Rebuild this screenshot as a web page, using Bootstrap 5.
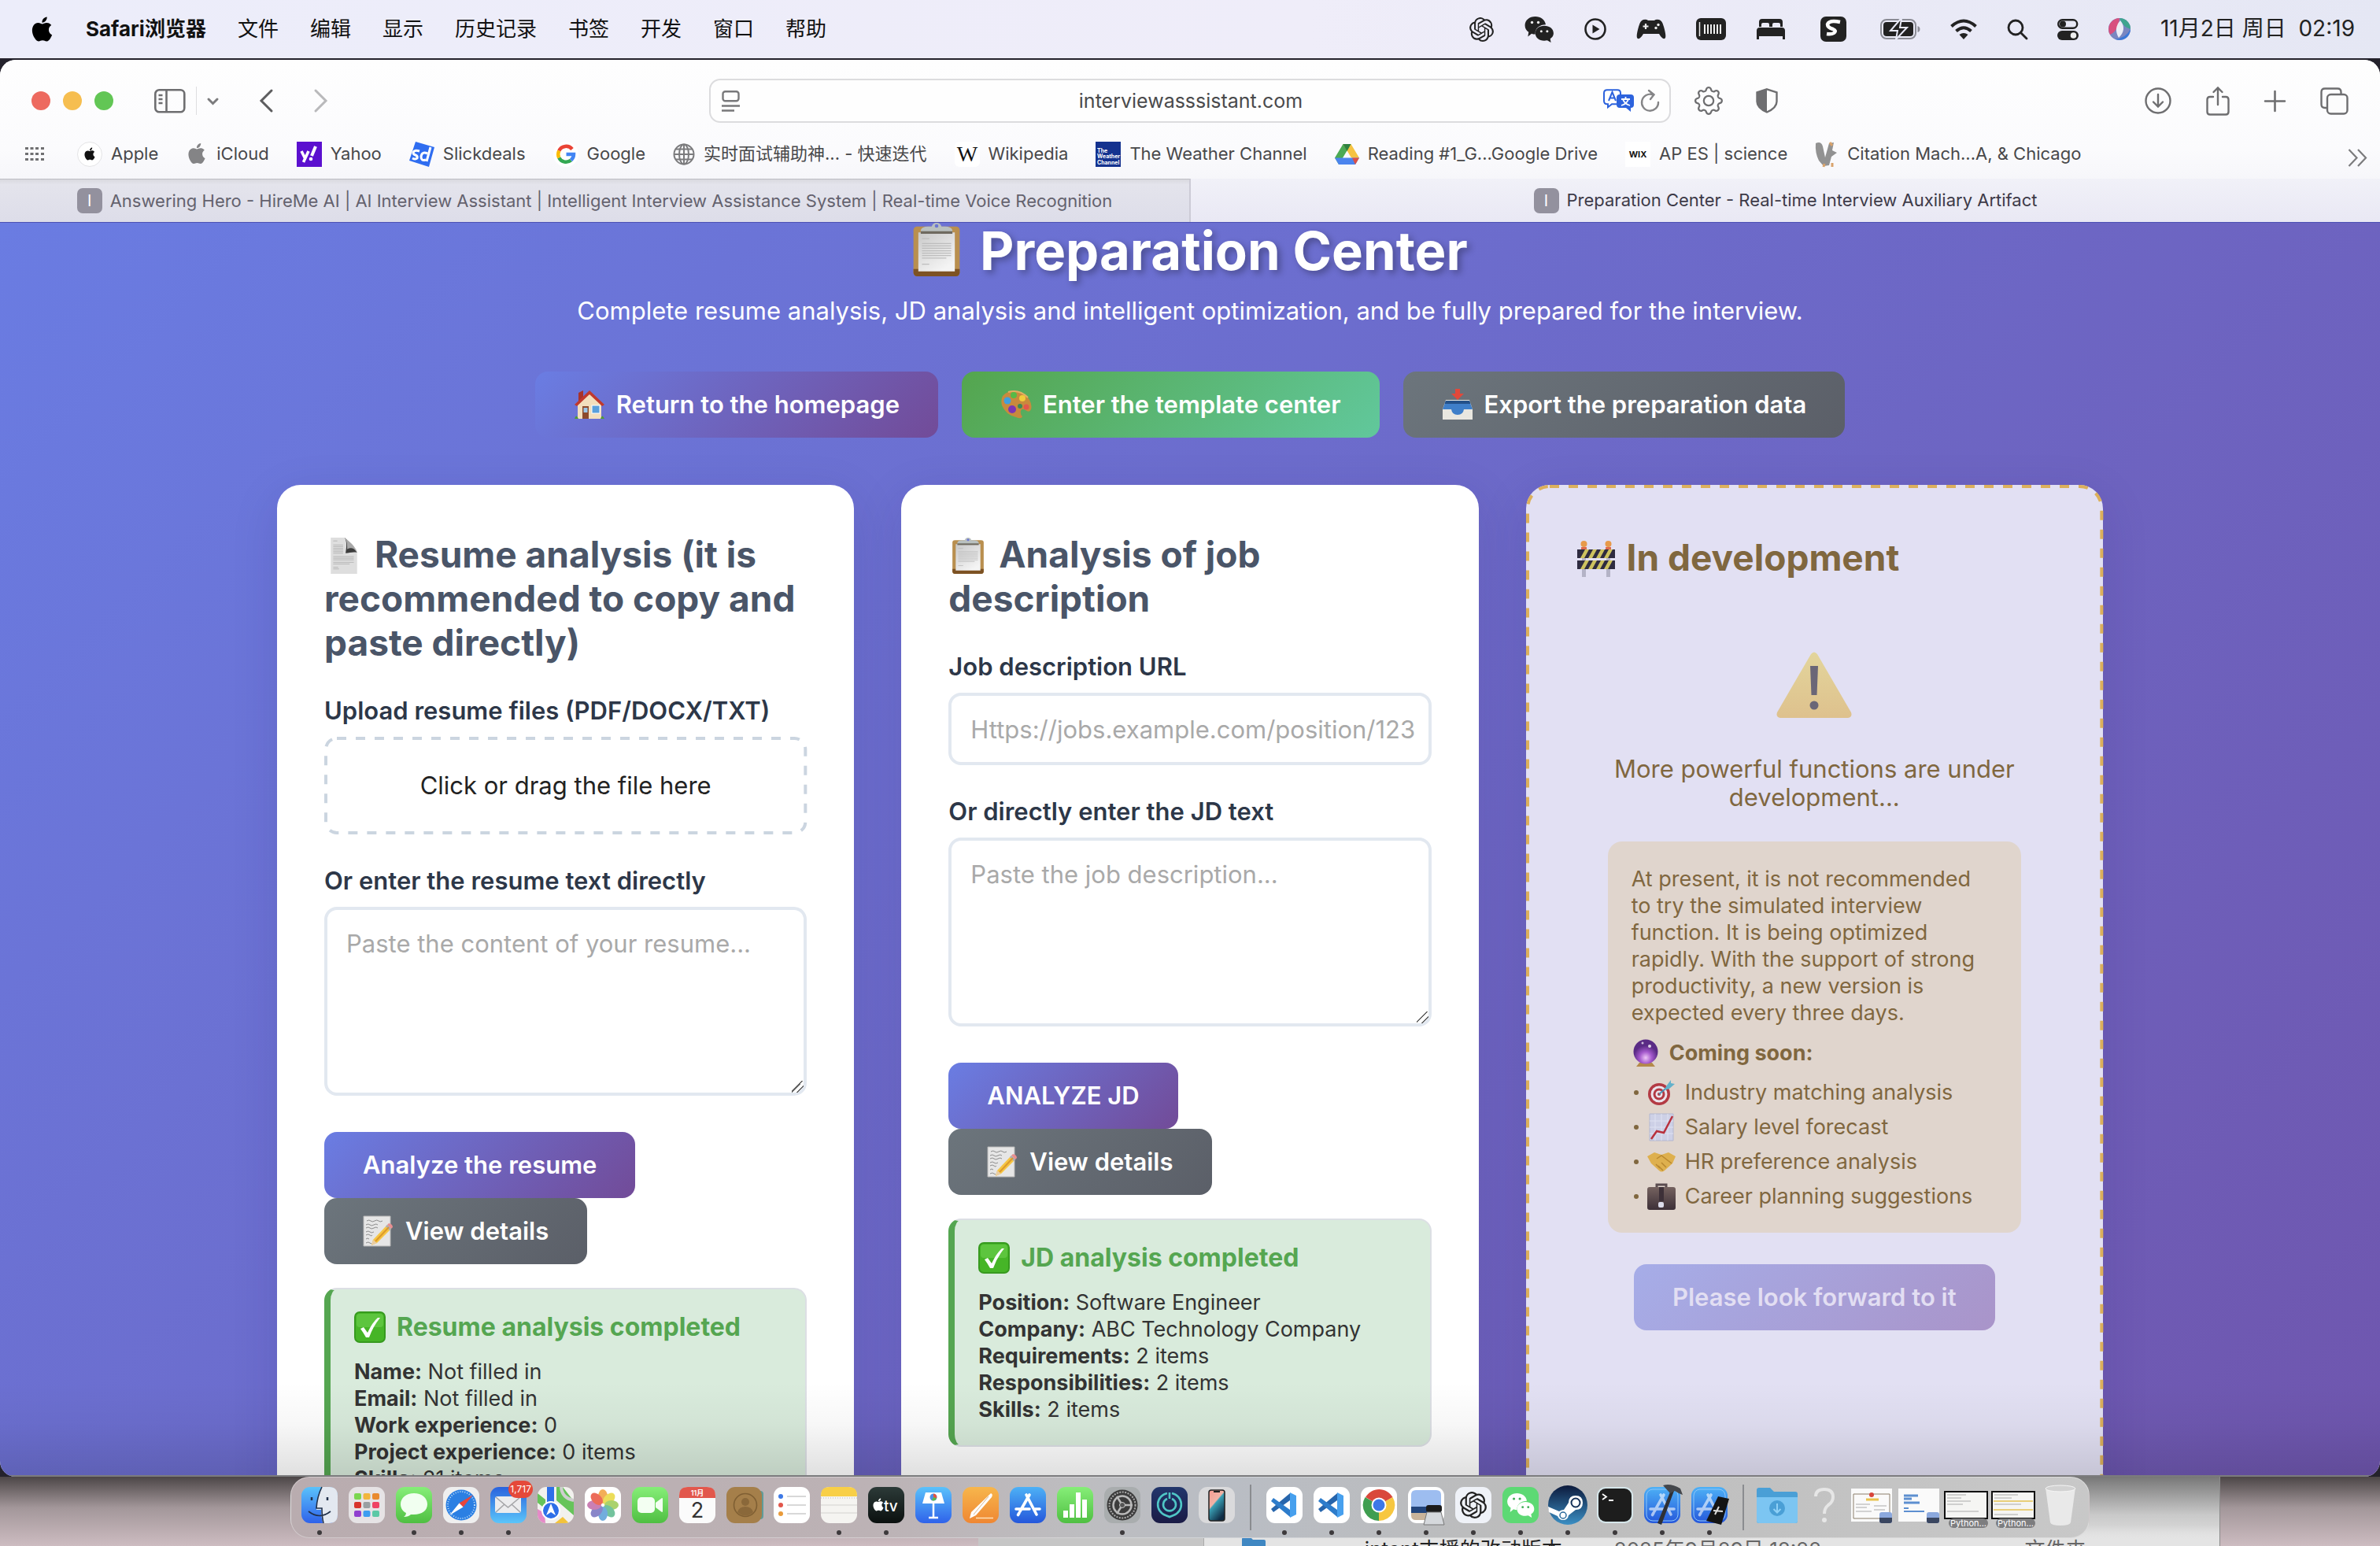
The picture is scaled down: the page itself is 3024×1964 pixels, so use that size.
<!DOCTYPE html>
<html lang="en">
<head>
<meta charset="utf-8">
<meta name="viewport" content="width=device-width, initial-scale=1">
<title>Preparation Center - Real-time Interview Auxiliary Artifact</title>
<link href="https://cdn.jsdelivr.net/npm/bootstrap@5.3.0/dist/css/bootstrap.min.css" rel="stylesheet">
<style>
:root{--ui:Inter,"Noto Sans CJK SC",sans-serif}
html,body{height:100%}
body{font-family:var(--ui);background:#24222c;overflow:hidden;line-height:1.2}
svg{display:block;flex:none;overflow:visible}
.desktop{height:100vh}
.menubar{height:74px;padding:0 32px 0 38px;background:linear-gradient(90deg,#ecedfa,#efedf9 55%,#e5e7f4);font-size:26px;color:#111;margin-bottom:2px}
.menubar .menus{gap:40px}
.menubar .tray{gap:38px;color:#222}
.menubar .clock{font-size:28px}
.menubar a{color:inherit;text-decoration:none}
.browser{background:#fcfcfd;border-radius:20px;overflow:hidden;flex:1 1 0;min-height:0}
.chrome-top{background:linear-gradient(180deg,#fefefe,#fbfbfd 55%,#f0f0f6)}
.toolbar{height:104px;color:#6e6e70}
.toolbar button,.bookmarks button{background:none;border:0;padding:0;color:inherit}
.toolbar .wing{flex:1 1 0;min-width:0}
.toolbar .acts{gap:44px}
.toolbar .exts{gap:42px;padding-left:30px}
.light{width:24px;height:24px;border-radius:50%}
.vline{height:36px;margin:0 13px;border-left:1px solid #dedee0}
.addr{flex:0 0 1222px;max-width:41%;height:56px;border:2px solid #dcdcde;border-radius:14px;background:#fefefe;padding:0 12px 0 14px}
.addr .side{flex:0 0 80px}
.addr input{border:0;background:none;outline:0;text-align:center;font-size:25px;color:#4a4a4c;min-width:0}
.bookmarks{height:47px;padding:0 16px 16px 32px;font-size:22px;color:#48484a}
.bookmarks .marks{gap:35px;padding-left:42px}
.bookmarks a{color:inherit;text-decoration:none;gap:11px;white-space:nowrap}
.bookmarks .more{margin-top:10px}
.tabs{height:55px;font-size:22px}
.tabs button{border:0;flex:1 1 0;gap:10px;white-space:nowrap;padding:0;color:#3d3a48;background:linear-gradient(180deg,#f1f1f8,#e9e8f4)}
.tabs button.idle{color:#64626e;background:linear-gradient(180deg,#d9d9df,#e4e4ec 12%,#dddde9);border-right:2px solid #cccbd6;border-top:1px solid #bcbcc2}
.tabs .fav{width:32px;height:32px;border-radius:7px;background:#93919e;color:#fff;font-size:20px;line-height:32px}
.webview{flex:1 1 0;min-height:0;overflow:hidden;position:relative;border-top:1px solid #4d52b4;background:linear-gradient(135deg,#6a7ce2 0%,#6f56ae 100%)}
.webview::after{content:"";position:absolute;left:0;right:0;bottom:0;height:120px;background:linear-gradient(180deg,transparent,rgba(0,0,0,.03) 45%,rgba(0,0,0,.12));pointer-events:none;border-bottom:2px solid #7b7b7d}
.page{max-width:2320px;margin:0 auto}
.hero{color:#fff;text-align:center}
.hero h1{font-size:67px;line-height:70px;font-weight:700;margin:0 0 22px;text-shadow:4px 4px 8px rgba(0,0,0,.3)}
.hero h1 svg{margin-right:8px}
.hero p{font-size:31px;line-height:38px;margin:0 0 58px}
.actions{gap:30px;margin-bottom:60px}
.cta{border:0;border-radius:16px;height:84px;padding:0 49px;font-size:31px;line-height:38px;font-weight:600;color:#fff;display:inline-flex;align-items:center;gap:14px;white-space:nowrap}
.cta-main{background:linear-gradient(135deg,#6a7de3,#724b98)}
.cta-green{background:linear-gradient(135deg,#54a54e,#61c89c)}
.cta-gray{background:linear-gradient(135deg,#6c757c,#5b5f68)}
.cta-soon{background:linear-gradient(135deg,#a6ade8,#a994c9);color:#e2def2}
.panels{display:grid;grid-template-columns:repeat(3,minmax(0,1fr));gap:60px}
.panel{background:#fff;border-radius:30px;padding:60px;box-shadow:0 16px 60px rgba(40,20,90,.13);color:#2d3748;min-width:0;position:relative}
.panel h2{font-size:46px;line-height:56px;font-weight:700;color:#4a5568;margin:0 0 40px}
.panel h2 svg,.hero h1 svg{display:inline-block;vertical-align:-8px}
.panel h2 svg{margin-right:3px}
.panel .lbl{display:block;font-size:31px;line-height:38px;font-weight:600;margin:0 0 14px}
.panel .field{display:block;width:100%;border:4px solid #e2e8f0;border-radius:16px;padding:24px 12px 24px 24px;font-size:31px;line-height:38px;color:#2d3748;margin-bottom:40px;background:#fff}
.panel input.field{height:92px}
.panel textarea.field{height:240px;margin-bottom:46px;resize:vertical}
textarea.field::-webkit-resizer{background:linear-gradient(135deg,transparent 42%,#666 42%,#666 50%,transparent 50%,transparent 68%,#666 68%,#666 76%,transparent 76%)}
.field::placeholder{color:#a9a9a9;opacity:1}
.drop{display:flex;align-items:center;justify-content:center;position:relative;height:124px;margin-bottom:40px;font-size:31px;color:#222;cursor:pointer}
.dashes{position:absolute;inset:0;width:100%;height:100%}
.dashes rect{x:2px;y:2px;width:calc(100% - 4px);height:calc(100% - 4px);fill:none;stroke-width:4px;stroke-dasharray:12 12}
.result{margin-top:30px;border:2px solid #dcdfe4;border-left:8px solid #55a651;border-radius:16px;background:#d9ebdc;padding:28px 30px;font-size:27px;line-height:34px;color:#333}
.result h3{font-size:32px;line-height:40px;font-weight:700;color:#55a651;margin:0 0 20px;display:flex;align-items:center;gap:14px}
.result p{margin:0}
.soon{background:#e2e0f3;padding:64px;color:#80673f}
.soon h2{color:#80673f;margin-bottom:92px}
.soon .tease{font-size:31px;line-height:36px;margin:47px 0 38px;text-align:center}
.soon .note{margin:0 40px 40px;border-radius:18px;background:#e0d5cd;padding:31px 44px 24px 30px;font-size:27px;line-height:34px}
.soon .note p{margin:0 0 14px}
.soon .note ul{margin:0;padding:0;list-style:none}
.soon .note li,.soon .note .head{display:flex;align-items:center;height:44px;gap:12px;white-space:nowrap}
.soon .note .head{height:40px;margin:0 0 8px}
.soon .note li::before{content:"";width:6px;height:6px;border-radius:50%;background:#80673f;margin:0 -1px 0 3px}
.shelf{flex:0 0 88px;position:relative;overflow:hidden;background:linear-gradient(180deg,#4c4647,#a3979a 45%,#cdbcc1)}
.finder{position:absolute;left:41.1%;right:6.7%;top:0;bottom:0;background:linear-gradient(180deg,#777,#c9c9c9 55%,#e6e6e6);border-right:1px solid #8a8a8a}
.finder .pane{width:287px;background:#c6c6c6;border-right:1px solid #aaa}
.finder .filerow{padding:77px 170px 0 30px;font-size:26px;line-height:32px;color:#222;white-space:nowrap;background:linear-gradient(180deg,transparent 70%,#e4e4e4 90%)}
.finder .fname{padding-left:118px}
.finder .fmeta{color:#666}
.finder .fdate{margin:0 auto 0 66px}
.dock{position:relative;height:78px;padding:0 6px;border-radius:24px;border:1px solid rgba(255,255,255,.35);background:linear-gradient(90deg,#b9acaf,#bcb2b5 32%,#bdbdc0 44%,#b9bdc4 52%,#bcbcbc 68%,#c8c8c8)}
.slot{width:60px;height:76px;border:0;background:none;padding:12px 0 0;display:flex;flex-direction:column;align-items:center;gap:9px;position:relative}
.slot.on::after{content:"";width:6px;height:6px;border-radius:50%;background:#3d3a3c}
.slot svg{width:46px;height:46px}
.slot .wide{width:58px}
.sep{width:26px;height:76px;padding:9px 12px}
.sep i{display:block;width:2px;height:58px;background:#8a8c90}
.bubble{position:absolute;top:4px;right:-1px;height:22px;border-radius:11px;background:#e5493a;color:#fff;font-size:12px;line-height:22px;padding:0 2px}
</style>
<script src="https://cdn.jsdelivr.net/npm/bootstrap@5.3.0/dist/js/bootstrap.bundle.min.js"></script>
</head>
<body>
<svg width="0" height="0" class="position-absolute" aria-hidden="true">
<defs>
<linearGradient id="gBlue" x2="0" y2="1"><stop stop-color="#5ac2fb"/><stop offset="1" stop-color="#2f62ea"/></linearGradient>
<linearGradient id="gBlue2" x2="0" y2="1"><stop stop-color="#2a62dd"/><stop offset="1" stop-color="#5bc5fa"/></linearGradient>
<linearGradient id="gApp" x2="0" y2="1"><stop stop-color="#4db1f6"/><stop offset="1" stop-color="#2557db"/></linearGradient>
<linearGradient id="gGreen" x2="0" y2="1"><stop stop-color="#86ee78"/><stop offset="1" stop-color="#4fbf42"/></linearGradient>
<linearGradient id="gOrange" x2="0" y2="1"><stop stop-color="#f7b64c"/><stop offset="1" stop-color="#ef8733"/></linearGradient>
<linearGradient id="gDark" x2="0" y2="1"><stop stop-color="#2c3a38"/><stop offset="1" stop-color="#0b100f"/></linearGradient>
<linearGradient id="gNavy" x2="0" y2="1"><stop stop-color="#22366c"/><stop offset="1" stop-color="#1a1b45"/></linearGradient>
<linearGradient id="gSteam" x2="0" y2="1"><stop stop-color="#0c1a3c"/><stop offset="1" stop-color="#3b8fc4"/></linearGradient>
<linearGradient id="gWarn" x2="0" y2="1"><stop stop-color="#e3d59c"/><stop offset="1" stop-color="#dec18d"/></linearGradient>
<linearGradient id="gPaper" x1="0" x2=".6" y2="1"><stop stop-color="#c9c9c9"/><stop offset="1" stop-color="#f4f4f4"/></linearGradient>
<linearGradient id="gCase" x2="0" y2="1"><stop stop-color="#75625f"/><stop offset="1" stop-color="#3d3038"/></linearGradient>
<radialGradient id="gOrb" cx=".5" cy=".75"><stop stop-color="#efc6f7"/><stop offset=".5" stop-color="#a458cc"/><stop offset="1" stop-color="#5a2b85"/></radialGradient>
<linearGradient id="gPhone" x2=".6" y2="1"><stop stop-color="#f59a90"/><stop offset=".45" stop-color="#f1b3a6"/><stop offset=".5" stop-color="#3aa0b5"/><stop offset="1" stop-color="#0f2c45"/></linearGradient>
<symbol id="apple" viewBox="0 0 24 24"><path fill="currentColor" d="M12.152 6.896c-.948 0-2.415-1.078-3.96-1.04-2.04.027-3.91 1.183-4.961 3.014-2.117 3.675-.546 9.103 1.519 12.09 1.013 1.454 2.208 3.09 3.792 3.039 1.52-.065 2.09-.987 3.935-.987 1.831 0 2.35.987 3.96.948 1.637-.026 2.676-1.48 3.676-2.948 1.156-1.688 1.636-3.325 1.662-3.415-.039-.013-3.182-1.221-3.22-4.857-.026-3.04 2.48-4.494 2.597-4.559-1.429-2.09-3.623-2.324-4.39-2.376-2-.156-3.675 1.09-4.61 1.09zM15.53 3.83c.843-1.012 1.4-2.427 1.245-3.83-1.207.052-2.662.805-3.532 1.818-.78.896-1.454 2.338-1.273 3.714 1.338.104 2.715-.688 3.559-1.701"/></symbol>
<symbol id="openai" viewBox="0 0 24 24"><path fill="currentColor" d="M22.2819 9.8211a5.9847 5.9847 0 0 0-.5157-4.9108 6.0462 6.0462 0 0 0-6.5098-2.9A6.0651 6.0651 0 0 0 4.9807 4.1818a5.9847 5.9847 0 0 0-3.9977 2.9 6.0462 6.0462 0 0 0 .7427 7.0966 5.98 5.98 0 0 0 .511 4.9107 6.051 6.051 0 0 0 6.5146 2.9001A5.9847 5.9847 0 0 0 13.2599 24a6.0557 6.0557 0 0 0 5.7718-4.2058 5.9894 5.9894 0 0 0 3.9977-2.9001 6.0557 6.0557 0 0 0-.7475-7.0729zm-9.022 12.6081a4.4755 4.4755 0 0 1-2.8764-1.0408l.1419-.0804 4.7783-2.7582a.7948.7948 0 0 0 .3927-.6813v-6.7369l2.02 1.1686a.071.071 0 0 1 .038.052v5.5826a4.504 4.504 0 0 1-4.4945 4.4944zm-9.6607-4.1254a4.4708 4.4708 0 0 1-.5346-3.0137l.142.0852 4.783 2.7582a.7712.7712 0 0 0 .7806 0l5.8428-3.3685v2.3324a.0804.0804 0 0 1-.0332.0615L9.74 19.9502a4.4992 4.4992 0 0 1-6.1408-1.6464zM2.3408 7.8956a4.485 4.485 0 0 1 2.3655-1.9728V11.6a.7664.7664 0 0 0 .3879.6765l5.8144 3.3543-2.0201 1.1685a.0757.0757 0 0 1-.071 0l-4.8303-2.7865A4.504 4.504 0 0 1 2.3408 7.872zm16.5963 3.8558L13.1038 8.364 15.1192 7.2a.0757.0757 0 0 1 .071 0l4.8303 2.7913a4.4944 4.4944 0 0 1-.6765 8.1042v-5.6772a.79.79 0 0 0-.407-.667zm2.0107-3.0231l-.142-.0852-4.7735-2.7818a.7759.7759 0 0 0-.7854 0L9.409 9.2297V6.8974a.0662.0662 0 0 1 .0284-.0615l4.8303-2.7866a4.4992 4.4992 0 0 1 6.6802 4.66zM8.3065 12.863l-2.02-1.1638a.0804.0804 0 0 1-.038-.0567V6.0742a4.4992 4.4992 0 0 1 7.3757-3.4537l-.142.0805L8.704 5.459a.7948.7948 0 0 0-.3927.6813zm1.0976-2.3654l2.602-1.4998 2.6069 1.4998v2.9994l-2.5974 1.4997-2.6067-1.4997Z"/></symbol>
<symbol id="clip" viewBox="0 0 40 44"><rect x="1" y="3" width="38" height="41" rx="3" fill="#b98f4f"/><path d="M1 38h38v3a3 3 0 0 1-3 3H4a3 3 0 0 1-3-3z" fill="#7d5223"/><path d="M5 8h30v32H5z" fill="url(#gPaper)"/><g stroke="#bdbdbd" stroke-width=".8"><path d="M8 13h6M8 17h24M8 19h24M8 21h24M8 23h24M8 25h24M8 27h24M8 29h20M8 34h6"/></g><path d="M7 8V6q1-3 6-3h3q1-3 4-3t4 3h3q5 0 6 3v2z" fill="#b9c0bf"/><path d="M7 7h26v2H7z" fill="#6f6a60"/><circle cx="20" cy="2.600" r="1.500" fill="#6b76d2"/></symbol>
<symbol id="docpage" viewBox="0 0 32 44"><path d="M0 0h17l15 17v27H0z" fill="#dedede"/><path d="M17 0c3 6 2 12 1 19 5-1 10-2 14-1z" fill="#3c3c3c"/><path d="M17 0c6 5 12 10 15 17-5-5-8-5-12-3 0-5 0-9-3-14z" fill="#a8a8a8"/><g stroke="#b5b5b5" stroke-width=".9"><path d="M3 4h5M3 9h12M3 11h12M3 13h12M3 15h12M3 17h12M3 19h12M3 23h25M3 25h25M3 27h25M3 30h25M3 32h20M3 36h6M3 38h7"/></g></symbol>
<symbol id="memo" viewBox="0 0 40 40"><path d="M1 1h34v38H1z" fill="#e6e6e6" stroke="#b5b5b5"/><g stroke="#8c8c8c" fill="none"><path d="M5 7q3-2 5 0t5 0 5 0 5 0M4 12q3-2 5 0t5 0 5 0M4 16q3-2 5 0t5 0 5 0M4 21q3-2 5 0t5 0M4 25q3-2 5 0t3 0M4 30q2-2 4 0M4 35q3-2 5 0t2 0"/></g><path d="M13 31L31 12l5 5-18 18-7 3z" fill="#f6c544"/><path d="M13 31l5 4-7 3z" fill="#e9cda4"/><path d="M31 12l2-2q5 1 5 5l-2 2z" fill="#e88f91"/><path d="M29 14l2-2 5 5-2 2z" fill="#aab"/><path d="M16 33L33 15" stroke="#dc9a2c" stroke-width="2"/></symbol>
<symbol id="check" viewBox="0 0 40 40"><rect x="1" y="1" width="38" height="38" rx="6" fill="#46b527" stroke="#379a1f" stroke-width="2"/><rect x="3" y="3" width="34" height="17" rx="4" fill="#6cd04f" opacity=".6"/><path d="M8 22l4-2 5 7q6-13 13-19l3 0Q24 19 19 33h-4Q11 26 8 22z" fill="#fff"/></symbol>
<symbol id="wechat" viewBox="0 0 40 36"><path fill="currentColor" d="M15 1C7 1 1 6 1 13c0 4 2 7 5 9l-1 6 5-4q2 1 5 1c-1-8 6-13 14-13C28 5 22 1 15 1z"/><path fill="currentColor" d="M27 13.500c-7 0-12 4-12 10s5 10 12 10q2 0 4-.5l5 3-1-5c3-2 4.500-4.500 4.500-7.500 0-6-5.500-10-12.500-10z"/><g><circle cx="10.500" cy="9" r="1.800"/><circle cx="19" cy="9" r="1.800"/><circle cx="23" cy="21" r="1.600"/><circle cx="31" cy="21" r="1.600"/></g></symbol>
<symbol id="code" viewBox="0 0 46 46"><rect width="46" height="46" rx="11" fill="#fff"/><path d="M30 8L6 28l3 4 21-15z" fill="#2765ac"/><path d="M30 38L6 18l3-4 21 15z" fill="#2d7ccb"/><path d="M30 7l8 4v24l-8 4z" fill="#47a0ee"/></symbol>
<symbol id="aicon" viewBox="0 0 46 46"><g stroke="#fff" stroke-width="3.600" stroke-linecap="round" fill="none"><path d="M25 10L13 31M21 10l13 25M8 28h17M32 28h6M12 33l-1.500 2.500"/></g></symbol>
</defs>
</svg>

<div class="desktop d-flex flex-column">
<header class="menubar d-flex align-items-center justify-content-between">
  <nav class="menus d-flex align-items-center" aria-label="Menu">
    <svg width="31" height="32" style="color:#000"><use href="#apple"/></svg>
    <a href="#" class="fw-bold">Safari浏览器</a><a href="#">文件</a><a href="#">编辑</a><a href="#">显示</a><a href="#">历史记录</a><a href="#">书签</a><a href="#">开发</a><a href="#">窗口</a><a href="#">帮助</a>
  </nav>
  <div class="tray d-flex align-items-center">
    <svg width="31" height="31"><use href="#openai"/></svg>
    <svg width="39" height="34" fill="#eee"><use href="#wechat"/></svg>
    <svg width="28" height="28" viewBox="0 0 28 28"><circle cx="14" cy="14" r="12.500" fill="none" stroke="#222" stroke-width="2.600"/><path d="M10.500 8.500v11l9-5.500z" fill="#222"/></svg>
    <svg width="38" height="26" viewBox="0 0 38 26"><path d="M9 1q4-1 6 1h8q2-2 6-1 4 1 6 9 4 14 1 15-3 1-7-6H9q-4 7-7 6-3-1 1-15 2-8 6-9z" fill="#222"/><path d="M12 6v7M8.500 9.500h7" stroke="#eee" stroke-width="2.200"/><circle cx="25" cy="11.500" r="1.700" fill="#eee"/><circle cx="28" cy="7.500" r="1.700" fill="#eee"/></svg>
    <svg width="38" height="28" viewBox="0 0 38 28"><rect width="38" height="28" rx="6" fill="#222"/><path d="M4.500 5v18" stroke="#eee" stroke-width="1.500"/><path d="M11 8v12M15 8v12M19 8v12M23 8v12M27 8v12M31 8v12" stroke="#eee" stroke-width="2"/></svg>
    <svg width="38" height="26" viewBox="0 0 38 26"><path d="M4 10V4q0-4 4-4h22q4 0 4 4v6h-3V7q0-2-2-2h-6q-2 0-2 2v3h-4V7q0-2-2-2H9q-2 0-2 2v3zM1 15q0-4 4-4h28q4 0 4 4v11h-3v-4H4v4H1z" fill="#222"/></svg>
    <svg width="44" height="32" viewBox="-6 0 44 32"><rect width="33" height="32" rx="7" fill="#222"/><path d="M25 7q-14-3-16 3 0 4 7 6 5 2 1 5-3 2-9 1" stroke="#fff" stroke-width="4.500" fill="none"/></svg>
    <svg width="51" height="26" viewBox="0 0 51 26"><rect x="1" y="1" width="44" height="24" rx="7" fill="none" stroke="#8b8c95" stroke-width="2"/><rect x="4" y="4" width="38" height="18" rx="4" fill="#222"/><path d="M47.500 9q3 1 3 4t-3 4z" fill="#8b8c95"/><path d="M26 0L13 15h9l-2 11 14-15h-9l2-11z" fill="#222" stroke="#e8e9f6" stroke-width="2"/></svg>
    <svg width="34" height="26" viewBox="0 0 34 26"><g fill="none" stroke="#222" stroke-width="4"><path d="M1.500 9.500q15.500-14 31 0M7.500 15.500q9.500-8.500 19 0"/></g><path d="M17 26l-5.500-6q5.500-4 11 0z" fill="#222"/></svg>
    <svg width="26" height="26" viewBox="0 0 26 26" fill="none" stroke="#222" stroke-width="2.800" stroke-linecap="round"><circle cx="11" cy="11" r="9"/><path d="M18 18l7 7"/></svg>
    <svg width="27" height="27" viewBox="0 0 27 27"><rect x="1.200" y="1.200" width="24" height="10.500" rx="5.250" fill="none" stroke="#222" stroke-width="2.400"/><circle cx="7" cy="6.500" r="4" fill="#222"/><rect y="15" width="27" height="12" rx="6" fill="#222"/><circle cx="20.500" cy="21" r="3.800" fill="#eee"/></svg>
    <svg width="28" height="28" viewBox="0 0 28 28"><circle cx="14" cy="14" r="14" fill="#7a86c0"/><path d="M14 0A14 14 0 0 0 2 21q10-4 12-21z" fill="#d8507f"/><path d="M14 0a14 14 0 0 1 14 14q-9-2-14-14z" fill="#3fa58f"/><path d="M28 14A14 14 0 0 1 8 26.500Q22 26 28 14z" fill="#3b78d8"/><path d="M15 3q9 11-2 22Q6 13 15 3z" fill="#fff" opacity=".85"/></svg>
    <span class="clock">11月2日 周日&nbsp; 02:19</span>
  </div>
</header>

<main class="browser d-flex flex-column">
  <div class="chrome-top">
    <div class="toolbar d-flex align-items-center">
      <div class="wing d-flex align-items-center">
        <div class="d-flex ps-4 ms-3 gap-3"><span class="light" style="background:#ed6a5f"></span><span class="light" style="background:#f6be50"></span><span class="light" style="background:#62c655"></span></div>
        <button class="ms-5" aria-label="Sidebar"><svg class="ms-1" width="40" height="31" viewBox="0 0 40 31" fill="none" stroke="#6e6e70" stroke-width="2.600"><rect x="1.300" y="1.300" width="37" height="28" rx="5"/><path d="M15.500 1v29M5.500 8h5M5.500 13h5M5.500 18h5"/></svg></button>
        <span class="vline"></span>
        <svg width="15" height="9" viewBox="0 0 15 9" fill="none" stroke="#7b7b7d" stroke-width="3" stroke-linecap="round"><path d="M2 2l5.500 5.500L13 2"/></svg>
        <button class="ms-5" aria-label="Back"><svg class="ms-1" width="17" height="30" viewBox="0 0 17 30" fill="none" stroke="#5d5d5f" stroke-width="3" stroke-linecap="round"><path d="M15 2L2 15l13 13"/></svg></button>
        <button class="ms-5" aria-label="Forward"><svg class="ms-1" width="17" height="30" viewBox="0 0 17 30" fill="none" stroke="#b9b9bb" stroke-width="3" stroke-linecap="round"><path d="M2 2l13 13L2 28"/></svg></button>
      </div>
      <div class="addr d-flex align-items-center">
        <div class="side"><svg width="23" height="27" viewBox="0 0 23 27" fill="none" stroke="#78787a" stroke-width="2.400"><rect x="1.500" y="1.200" width="20" height="12" rx="3"/><path d="M0 19.500h23M0 25.500h16"/></svg></div>
        <input class="flex-fill" aria-label="Address" value="interviewasssistant.com">
        <div class="side d-flex justify-content-end align-items-center gap-2">
          <svg width="40" height="30" viewBox="0 0 40 30"><path d="M5 1.200h13q4 0 4 4v10q0 4-4 4h-7l-5 4v-4H5q-4 0-4-4v-10q0-4 4-4z" fill="#fff" stroke="#2d63dd" stroke-width="2"/><path d="M7 15l4.500-11L16 15M8.500 11.500h6" stroke="#2d63dd" stroke-width="2" fill="none"/><path d="M21 7h14q4 0 4 4v9q0 4-4 4v5l-6-5h-8q-4 0-4-4v-9q0-4 4-4z" fill="#2d63dd"/><path d="M23 13h11M28.500 10v3M32 13q-2 6-9 8M25 13q2 6 9 8" stroke="#fff" stroke-width="1.800" fill="none"/></svg>
          <svg width="24" height="28" viewBox="0 0 24 28" fill="none" stroke="#858587" stroke-width="2.400" stroke-linecap="round"><path d="M22 16A10.500 10.500 0 1 1 15 6.300M10 1l6.500 5.300L12 12"/></svg>
        </div>
      </div>
      <div class="wing d-flex align-items-center justify-content-between">
        <div class="exts d-flex align-items-center">
          <svg width="36" height="36" viewBox="0 0 16 16"><path fill="#6e6e70" d="M8 4.754a3.246 3.246 0 1 0 0 6.492 3.246 3.246 0 0 0 0-6.492zM5.754 8a2.246 2.246 0 1 1 4.492 0 2.246 2.246 0 0 1-4.492 0z M9.796 1.343c-.527-1.79-3.065-1.79-3.592 0l-.094.319a.873.873 0 0 1-1.255.52l-.292-.16c-1.64-.892-3.433.902-2.54 2.541l.159.292a.873.873 0 0 1-.52 1.255l-.319.094c-1.79.527-1.79 3.065 0 3.592l.319.094a.873.873 0 0 1 .52 1.255l-.16.292c-.892 1.64.901 3.434 2.541 2.54l.292-.159a.873.873 0 0 1 1.255.52l.094.319c.527 1.79 3.065 1.79 3.592 0l.094-.319a.873.873 0 0 1 1.255-.52l.292.16c1.64.893 3.434-.902 2.54-2.541l-.159-.292a.873.873 0 0 1 .52-1.255l.319-.094c1.79-.527 1.79-3.065 0-3.592l-.319-.094a.873.873 0 0 1-.52-1.255l.16-.292c.893-1.64-.902-3.433-2.541-2.54l-.292.159a.873.873 0 0 1-1.255-.52l-.094-.319zm-2.633.283c.246-.835 1.428-.835 1.674 0l.094.319a1.873 1.873 0 0 0 2.693 1.115l.291-.16c.764-.415 1.6.42 1.184 1.185l-.159.292a1.873 1.873 0 0 0 1.116 2.692l.318.094c.835.246.835 1.428 0 1.674l-.319.094a1.873 1.873 0 0 0-1.115 2.693l.16.291c.415.764-.42 1.6-1.185 1.184l-.291-.159a1.873 1.873 0 0 0-2.693 1.116l-.094.318c-.246.835-1.428.835-1.674 0l-.094-.319a1.873 1.873 0 0 0-2.692-1.115l-.292.16c-.764.415-1.6-.42-1.184-1.185l.159-.291A1.873 1.873 0 0 0 1.945 8.93l-.319-.094c-.835-.246-.835-1.428 0-1.674l.319-.094A1.873 1.873 0 0 0 3.06 4.377l-.16-.292c-.415-.764.42-1.6 1.185-1.184l.292.159a1.873 1.873 0 0 0 2.692-1.115l.094-.319z"/></svg>
          <svg width="28" height="32" viewBox="0 0 28 32"><path d="M14 1.300l12.500 4V17q0 8-12.500 13.500Q1.500 25 1.500 17V5.300z" fill="#fcfcfc" stroke="#6e6e70" stroke-width="2.400"/><path d="M14 1L1.500 5v12Q1.500 25 14 31z" fill="#6e6e70"/></svg>
        </div>
        <div class="acts d-flex align-items-center pe-4 me-3">
          <button aria-label="Downloads"><svg width="34" height="34" viewBox="0 0 34 34" fill="none" stroke="#6e6e70" stroke-width="2.400" stroke-linecap="round"><circle cx="17" cy="17" r="15.500"/><path d="M17 9v15M11 18.500l6 6 6-6"/></svg></button>
          <button aria-label="Share"><svg width="30" height="37" viewBox="0 0 30 37" fill="none" stroke="#6e6e70" stroke-width="2.400" stroke-linecap="round"><path d="M9 13H5q-3.500 0-3.500 3.500V32q0 3.500 3.500 3.500h20q3.500 0 3.500-3.500V16.500Q28.500 13 25 13h-4M15 23V2M9.500 7L15 1.500 20.500 7"/></svg></button>
          <button aria-label="New tab"><svg width="27" height="27" viewBox="0 0 27 27" stroke="#6e6e70" stroke-width="2.600" stroke-linecap="round"><path d="M13.500 1v25M1 13.500h25"/></svg></button>
          <button aria-label="Tab overview"><svg width="36" height="35" viewBox="0 0 36 35" fill="none" stroke="#6e6e70" stroke-width="2.400"><path d="M8.500 26H6q-4.500 0-4.500-4.500V6Q1.500 1.500 6 1.500h16q4.500 0 4.500 4.500v2.500"/><rect x="9" y="9" width="25.500" height="24.500" rx="4.500" fill="#fcfcfc"/></svg></button>
        </div>
      </div>
    </div>
    <div class="bookmarks d-flex align-items-center justify-content-between">
      <div class="d-flex align-items-center">
        <svg width="24" height="18" viewBox="0 0 24 18" fill="#707072"><g id="dotrow"><rect width="4" height="3"/><rect x="6.500" width="4" height="3"/><rect x="13" width="4" height="3"/><rect x="20" width="4" height="3"/></g><use href="#dotrow" y="7"/><use href="#dotrow" y="14"/></svg>
        <nav class="marks d-flex align-items-center" aria-label="Bookmarks">
          <a href="#" class="d-flex align-items-center"><svg width="32" height="32" viewBox="0 0 32 32"><circle cx="16" cy="16" r="15.500" fill="#fff" stroke="#e4e4e6"/><use href="#apple" x="8" y="7" width="16" height="17" color="#111"/></svg>Apple</a>
          <a href="#" class="d-flex align-items-center"><svg width="28" height="26" style="color:#848486"><use href="#apple"/></svg>iCloud</a>
          <a href="#" class="d-flex align-items-center"><svg width="32" height="32" viewBox="0 0 32 32"><rect width="32" height="32" fill="#5b10cf"/><path d="M6 12l4.500 9M15 12L8.500 26" stroke="#fff" stroke-width="3.600"/><path d="M24 6l-5 12" stroke="#fff" stroke-width="4"/><circle cx="18" cy="22" r="2.300" fill="#fff"/></svg>Yahoo</a>
          <a href="#" class="d-flex align-items-center"><svg width="32" height="32" viewBox="0 0 32 32"><path d="M8 0l24 7-7 25L0 24z" fill="#2f6df0"/><path d="M13 12q-7-2-8 2 0 2 3 3t2 4q-2 2-6 0M23 15q-7-3-8 4 0 6 6 4M27 7l-5 18" stroke="#fff" stroke-width="3" fill="none"/></svg>Slickdeals</a>
          <a href="#" class="d-flex align-items-center"><svg width="32" height="32" viewBox="0 0 32 32"><circle cx="16" cy="16" r="16" fill="#fff"/><g fill="none" stroke-width="4.500"><path d="M24 9.500A10 10 0 0 0 7.300 11.500" stroke="#ea4335"/><path d="M7.300 11.500a10 10 0 0 0 0 9" stroke="#fbbc05"/><path d="M7.300 20.500A10 10 0 0 0 22.500 23.500" stroke="#34a853"/><path d="M22.500 23.500A10 10 0 0 0 26 16h-9.500" stroke="#4285f4"/></g></svg>Google</a>
          <a href="#" class="d-flex align-items-center"><svg width="28" height="28" viewBox="0 0 28 28" fill="none" stroke="#7b7b7d" stroke-width="2"><circle cx="14" cy="14" r="12.500"/><ellipse cx="14" cy="14" rx="6" ry="12.500"/><path d="M14 1v26M1 14h26M4 7.500h20M4 20.500h20"/></svg>实时面试辅助神... - 快速迭代</a>
          <a href="#" class="d-flex align-items-center"><svg width="32" height="32" viewBox="0 0 32 32"><rect width="32" height="32" rx="6" fill="#fff"/><text x="16" y="25" text-anchor="middle" font-family="Liberation Serif" font-size="28" fill="#111">W</text></svg>Wikipedia</a>
          <a href="#" class="d-flex align-items-center"><svg width="32" height="32" viewBox="0 0 32 32"><rect width="32" height="32" fill="#14328f"/><g font-family="Inter" font-size="7" font-weight="700" fill="#fff"><text x="2" y="14">The</text><text x="2" y="21">Weather</text><text x="2" y="29">Channel</text></g></svg>The Weather Channel</a>
          <a href="#" class="d-flex align-items-center"><svg width="31" height="28" viewBox="0 0 31 28"><path d="M10.500 1h10L5 27 0 18.500z" fill="#4caa55"/><path d="M10.500 1h10L31 18.500H21z" fill="#f6c342"/><path d="M10.500 1h10l-5 9z" fill="#2f8140"/><path d="M0 18.500h31L26 27H5z" fill="#4b84ee"/><path d="M22 18.500h9L26 27z" fill="#de5044"/></svg>Reading #1_G...Google Drive</a>
          <a href="#" class="d-flex align-items-center"><svg width="32" height="32" viewBox="0 0 32 32"><rect width="32" height="32" fill="#fff"/><text x="16" y="20" text-anchor="middle" font-family="Inter" font-size="11" font-weight="700" fill="#111">WIX</text></svg>AP ES | science</a>
          <a href="#" class="d-flex align-items-center"><svg width="30" height="32" viewBox="0 0 30 32"><path d="M1 2q7-3 9 4l3 14 5-18 6-1-2 10 6 3-7 5-3 11-7 1-6-7Q0 14 1 2z" fill="#929292"/><path d="M19 1l3 4M12 28l-1 4M22 27v5" stroke="#d9a36c" stroke-width="3"/></svg>Citation Mach...A, &amp; Chicago</a>
        </nav>
      </div>
      <button class="more" aria-label="More bookmarks"><svg width="25" height="23" viewBox="0 0 25 23" fill="none" stroke="#7b7b7d" stroke-width="2.200"><path d="M1.500 1l10 10.500-10 10.500M13 1l10 10.500L13 22"/></svg></button>
    </div>
    <div class="tabs d-flex">
      <button class="idle d-flex align-items-center justify-content-center"><span class="fav">I</span>Answering Hero - HireMe AI | AI Interview Assistant | Intelligent Interview Assistance System | Real-time Voice Recognition</button>
      <button class="d-flex align-items-center justify-content-center"><span class="fav">I</span>Preparation Center - Real-time Interview Auxiliary Artifact</button>
    </div>
  </div>

  <div class="webview">
    <div class="page">
      <section class="hero">
        <h1><svg width="62" height="68"><use href="#clip"/></svg> Preparation Center</h1>
        <p>Complete resume analysis, JD analysis and intelligent optimization, and be fully prepared for the interview.</p>
        <div class="actions d-flex justify-content-center">
          <button class="cta cta-main"><svg width="40" height="40" viewBox="0 0 40 40"><path d="M6 5l6-3v10l-6 6z" fill="#a8322a"/><path d="M5 19L20 4l15 15v19H5z" fill="#f3dfbd"/><path d="M1 20L20 2l19 18-3 2L20 7 4 22z" fill="#c0392d"/><rect x="11" y="22" width="8" height="16" fill="#8c4a2c"/><rect x="12.500" y="24" width="5" height="6" fill="#9cc9ea"/><rect x="23" y="21" width="10" height="10" fill="#5aa0dc" stroke="#fff"/><path d="M1 38q2-7 5 0zM34 38q2-7 5 0z" fill="#4f9a35"/></svg>Return to the homepage</button>
          <button class="cta cta-green"><svg width="40" height="40" viewBox="0 0 40 40"><path d="M10 4Q24 0 35 11q6 8 4 15-2 5-7 1-5-3-6 1-1 4 2 7-1 4-8 1Q7 33 2 21-1 8 10 4z" fill="#c88a3d"/><path d="M10 4Q24 0 35 11" stroke="#e4ae62" stroke-width="2" fill="none"/><circle cx="9" cy="15" r="4.500" fill="#3f9fe0"/><circle cx="17" cy="8" r="4" fill="#58b947"/><circle cx="28" cy="12" r="4" fill="#f1cb3b"/><circle cx="33" cy="23" r="3.500" fill="#e2574c"/><circle cx="15" cy="26" r="5" fill="#7b35b5"/><circle cx="25" cy="22" r="3" fill="#3c8a55"/></svg>Enter the template center</button>
          <button class="cta cta-gray"><svg width="40" height="40" viewBox="0 0 40 40"><path d="M5 14h30l4 12v13H1V26z" fill="#e9e7e0"/><path d="M5 15h30l4 11H28q-1 7-8 7t-8-7H1z" fill="#3f7fc9"/><path d="M5 15h30l1.500 4h-33z" fill="#245189"/><path d="M17 0h6v6h5l-8 8-8-8h5z" fill="#e2483a"/></svg>Export the preparation data</button>
        </div>
      </section>
      <div class="panels">
        <section class="panel">
          <h2><svg width="50" height="46"><use href="#docpage"/></svg> Resume analysis (it is recommended to copy and paste directly)</h2>
          <label class="lbl" for="cv">Upload resume files (PDF/DOCX/TXT)</label>
          <label class="drop"><svg class="dashes"><rect rx="14" stroke="#cbd5e0"/></svg>Click or drag the file here<input id="cv" type="file" class="visually-hidden"></label>
          <label class="lbl" for="cvtext">Or enter the resume text directly</label>
          <textarea class="field" id="cvtext" placeholder="Paste the content of your resume..."></textarea>
          <div class="d-flex flex-column align-items-start">
            <button class="cta cta-main">Analyze the resume</button>
            <button class="cta cta-gray"><svg width="40" height="40"><use href="#memo"/></svg>View details</button>
          </div>
          <div class="result"><h3><svg width="40" height="40"><use href="#check"/></svg>Resume analysis completed</h3>
            <p><b>Name:</b> Not filled in</p><p><b>Email:</b> Not filled in</p><p><b>Work experience:</b> 0</p><p><b>Project experience:</b> 0 items</p><p><b>Skills:</b> 21 items</p></div>
        </section>
        <section class="panel">
          <h2><svg width="50" height="46"><use href="#clip"/></svg> Analysis of job description</h2>
          <label class="lbl" for="jdurl">Job description URL</label>
          <input class="field" id="jdurl" type="url" placeholder="Https://jobs.example.com/position/123">
          <label class="lbl" for="jdtext">Or directly enter the JD text</label>
          <textarea class="field" id="jdtext" placeholder="Paste the job description..."></textarea>
          <div class="d-flex flex-column align-items-start">
            <button class="cta cta-main">ANALYZE JD</button>
            <button class="cta cta-gray"><svg width="40" height="40"><use href="#memo"/></svg>View details</button>
          </div>
          <div class="result"><h3><svg width="40" height="40"><use href="#check"/></svg>JD analysis completed</h3>
            <p><b>Position:</b> Software Engineer</p><p><b>Company:</b> ABC Technology Company</p><p><b>Requirements:</b> 2 items</p><p><b>Responsibilities:</b> 2 items</p><p><b>Skills:</b> 2 items</p></div>
        </section>
        <section class="panel soon">
          <svg class="dashes"><rect rx="28" stroke="#dcb05c"/></svg>
          <h2><svg width="50" height="46" viewBox="0 0 50 46"><path d="M7 10h5v36H7zM38 10h5v36h-5z" fill="#b4b3c6"/><circle cx="9.500" cy="4" r="4" fill="#e79a4a"/><circle cx="40.500" cy="4" r="4" fill="#e79a4a"/><path d="M6 8h7v4H6zM37 8h7v4h-7z" fill="#df6a4c"/><path d="M1 11h48v11H1zM1 25h48v11H1z" fill="#2e2b40"/><path d="M5 22l6-11h5l-6 11zM15 22l6-11h5l-6 11zM25 22l6-11h5l-6 11zM35 22l6-11h5l-6 11zM5 36l6-11h5l-6 11zM15 36l6-11h5l-6 11zM25 36l6-11h5l-6 11zM35 36l6-11h5l-6 11z" fill="#cdc25f"/></svg> In development</h2>
          <svg class="mx-auto" width="96" height="84" viewBox="0 0 96 84"><path d="M44 3q4-5 8 0l43 74q2 6-4 7H5q-6-1-4-7z" fill="url(#gWarn)"/><path d="M43 18h10l-1.500 37h-7z" fill="#6a6677"/><circle cx="48" cy="68" r="5.500" fill="#6a6677"/></svg>
          <p class="tease">More powerful functions are under development...</p>
          <div class="note">
            <p>At present, it is not recommended to try the simulated interview function. It is being optimized rapidly. With the support of strong productivity, a new version is expected every three days.</p>
            <div class="head"><svg width="36" height="36" viewBox="0 0 36 36"><path d="M10 30h16l4 5H6z" fill="#b48a4a"/><circle cx="18" cy="16" r="15.500" fill="url(#gOrb)"/><circle cx="23" cy="9" r="2" fill="#fff" opacity=".8"/><circle cx="14" cy="5" r="1.500" fill="#fff" opacity=".7"/></svg><b>Coming soon:</b></div>
            <ul>
              <li><svg width="36" height="32" viewBox="0 0 36 32"><circle cx="15" cy="18" r="14" fill="#b33a44"/><circle cx="15" cy="18" r="10.500" fill="#eae4ec"/><circle cx="15" cy="18" r="7.500" fill="#b33a44"/><circle cx="15" cy="18" r="4.500" fill="#eae4ec"/><circle cx="15" cy="18" r="2" fill="#b33a44"/><path d="M15 18L29 6" stroke="#4b93b5" stroke-width="2"/><path d="M24 8l6-8v4l5 1-7 6-6 2z" fill="#62b1cb"/></svg>Industry matching analysis</li>
              <li><svg width="36" height="36" viewBox="0 0 36 36"><path d="M3 1h30v34H3z" fill="#cdd0e6" stroke="#b3b7d0"/><path d="M10 1v34M18 1v34M26 1v34M3 10h30M3 18h30M3 26h30" stroke="#dfe2f2"/><path d="M5 33l7-10 9 2L32 4" fill="none" stroke="#b8313d" stroke-width="2.500"/></svg>Salary level forecast</li>
              <li><svg width="36" height="26" viewBox="0 0 36 26"><path d="M0 6l9-5 9 3 9-3 9 5-4 9-10 9q-4 3-7 0L5 15z" fill="#deb04e"/><path d="M12 9l6-4 13 10M16 21l-5-5M20 24l-6-6M24 20l-6-6" stroke="#b98830" stroke-width="1.500" fill="none"/></svg>HR preference analysis</li>
              <li><svg width="36" height="34" viewBox="0 0 36 34"><path d="M12 6V2h12v4" fill="none" stroke="#5b4d50" stroke-width="3"/><rect y="5" width="36" height="29" rx="3" fill="url(#gCase)"/><path d="M15 5h6v18h-6z" fill="#3d3038"/><rect x="14" y="24" width="7" height="7" rx="2" fill="#dcdcea"/></svg>Career planning suggestions</li>
            </ul>
          </div>
          <div class="text-center"><button class="cta cta-soon" disabled>Please look forward to it</button></div>
        </section>
      </div>
    </div>
  </div>
</main>

<footer class="shelf d-flex justify-content-center align-items-start">
  <div class="finder d-flex">
    <div class="pane"></div>
    <div class="filerow d-flex flex-fill">
      <span class="d-flex gap-2"><span>›</span><svg width="30" height="26" viewBox="0 0 30 26"><path d="M0 2q0-2 2-2h9l3 3h14q2 0 2 2v21H0z" fill="#3f87c2"/></svg><span class="fname">intent支援的改动版本</span></span><span class="fmeta fdate">2025年9月29日 18:22</span><span class="fmeta">文件夹</span>
    </div>
  </div>
  <nav class="dock d-flex" aria-label="Dock">
    <button class="slot on" aria-label="Finder"><svg viewBox="0 0 46 46"><rect width="46" height="46" rx="11" fill="url(#gBlue)"/><path d="M26 0h9q11 0 11 11v24q0 11-11 11h-8q-2-8-2-17h-6Q20 12 26 0z" fill="#e3e8f0"/><path d="M13 13v4M33 13v4" stroke="#21304a" stroke-width="2.500"/><path d="M9 31q14 11 28 0M26 0q-6 12-7 27h7q0 11 2 19" stroke="#21304a" stroke-width="1.600" fill="none"/></svg></button>
    <button class="slot" aria-label="Launchpad"><svg viewBox="0 0 46 46"><rect width="46" height="46" rx="11" fill="#e6e3e5"/><rect x="7" y="8" width="9" height="8" rx="2" fill="#7bd650"/><rect x="18.500" y="8" width="9" height="8" rx="2" fill="#f2b63c"/><rect x="30" y="8" width="9" height="8" rx="2" fill="#e98a2f"/><rect x="7" y="19" width="9" height="8" rx="2" fill="#d8332b"/><rect x="18.500" y="19" width="9" height="8" rx="2" fill="#9a9fa2"/><rect x="30" y="19" width="9" height="8" rx="2" fill="#ef4264"/><rect x="7" y="30" width="9" height="8" rx="2" fill="#9140cf"/><rect x="18.500" y="30" width="9" height="8" rx="2" fill="#3d9df0"/><rect x="30" y="30" width="9" height="8" rx="2" fill="#5cc8a5"/></svg></button>
    <button class="slot on" aria-label="Messages"><svg viewBox="0 0 46 46"><rect width="46" height="46" rx="11" fill="url(#gGreen)"/><path d="M23 8c-10 0-17 6-17 14 0 5 3 9 7 11q0 3-3 5 6 0 9-3h4c10 0 17-5 17-13S33 8 23 8z" fill="#f1fff0"/></svg></button>
    <button class="slot on" aria-label="Safari"><svg viewBox="0 0 46 46"><rect width="46" height="46" rx="11" fill="#efefef"/><circle cx="23" cy="23" r="19.500" fill="#2b7fe3"/><circle cx="23" cy="23" r="17" fill="none" stroke="#bcdcf8" stroke-width="2" stroke-dasharray="1 2"/><path d="M38 10L25.500 25.500l-5-5z" fill="#e8453b"/><path d="M8 36l12.500-15.500 5 5z" fill="#fff"/></svg></button>
    <button class="slot on" aria-label="Mail"><svg viewBox="0 0 46 46"><rect width="46" height="46" rx="11" fill="url(#gBlue2)"/><rect x="6" y="12" width="33" height="21" rx="3" fill="#ececee"/><path d="M7 13l15.500 13L38 13M7 32l11-10M38 32L27 22" stroke="#a5a5a8" stroke-width="1.600" fill="none"/></svg><span class="bubble">1,717</span></button>
    <button class="slot" aria-label="Maps"><svg viewBox="0 0 46 46"><clipPath id="rc"><rect width="46" height="46" rx="11"/></clipPath><g clip-path="url(#rc)"><path fill="#f2f1ee" d="M0 0h46v46H0z"/><path d="M0 8l10 8v12L0 20zM24 0h8l14 18v18L24 17z" fill="#66c45a"/><path d="M0 28q10 4 10 18H0z" fill="#e58ac7"/><path d="M22 46l10-8 8 8z" fill="#f3c33b"/><path d="M12 0h9v24h-9z" fill="#2e6fe8"/><path d="M30 0q1 14 16 17" stroke="#cfcfcf" stroke-width="4" fill="none"/></g><circle cx="17" cy="30" r="11" fill="#2e6fe8" stroke="#fff" stroke-width="2"/><path d="M17 21l6 15-6-4-6 4z" fill="#fff"/></svg></button>
    <button class="slot" aria-label="Photos"><svg viewBox="0 0 46 46"><rect width="46" height="46" rx="11" fill="#fff"/><g opacity=".85"><ellipse cx="23" cy="12" rx="6" ry="9" fill="#f2a13c"/><ellipse cx="23" cy="12" rx="6" ry="9" fill="#e9d83e" transform="rotate(45 23 23)"/><ellipse cx="23" cy="12" rx="6" ry="9" fill="#9ccb54" transform="rotate(90 23 23)"/><ellipse cx="23" cy="12" rx="6" ry="9" fill="#5bb98d" transform="rotate(135 23 23)"/><ellipse cx="23" cy="12" rx="6" ry="9" fill="#5a9fd8" transform="rotate(180 23 23)"/><ellipse cx="23" cy="12" rx="6" ry="9" fill="#7472c0" transform="rotate(225 23 23)"/><ellipse cx="23" cy="12" rx="6" ry="9" fill="#c169a7" transform="rotate(270 23 23)"/><ellipse cx="23" cy="12" rx="6" ry="9" fill="#e9533e" transform="rotate(315 23 23)"/></g></svg></button>
    <button class="slot" aria-label="FaceTime"><svg viewBox="0 0 46 46"><rect width="46" height="46" rx="11" fill="url(#gGreen)"/><rect x="7" y="13" width="22" height="20" rx="5" fill="#f3fff2"/><path d="M30 20l8-6q1 0 1 1v16q0 1-1 1l-8-6z" fill="#f3fff2"/></svg></button>
    <button class="slot" aria-label="Calendar"><svg viewBox="0 0 46 46"><rect width="46" height="46" rx="11" fill="#fbfbfb"/><path d="M0 14V11Q0 0 11 0h24q11 0 11 11v3z" fill="#e2574c"/><g font-family="Inter,'Noto Sans CJK SC',sans-serif" text-anchor="middle"><text x="23" y="11" font-size="9" font-weight="600" fill="#fff">11月</text><text x="23" y="39" font-size="27" fill="#333">2</text></g></svg></button>
    <button class="slot" aria-label="Contacts"><svg viewBox="0 0 46 46"><rect x="36" y="5" width="11" height="36" rx="4" fill="#5e9c9a"/><rect width="45" height="46" rx="11" fill="#a57f4a"/><g fill="none" stroke="#7f5f33" stroke-width="1.600"><circle cx="24" cy="23" r="14.500"/></g><circle cx="24" cy="19" r="5" fill="#8a683a"/><path d="M14 32q2-7 10-7t10 7q-10 9-20 0z" fill="#8a683a"/></svg></button>
    <button class="slot" aria-label="Reminders"><svg viewBox="0 0 46 46"><rect width="46" height="46" rx="11" fill="#fff"/><path d="M17 12h24M17 23h24M17 34h24" stroke="#ccc" stroke-width="1.500"/><circle cx="9" cy="12" r="3" fill="#3d79e6"/><circle cx="9" cy="23" r="3" fill="#e2564b"/><circle cx="9" cy="34" r="3" fill="#e99b3b"/></svg></button>
    <button class="slot on" aria-label="Notes"><svg viewBox="0 0 46 46"><rect width="46" height="46" rx="11" fill="#f5f4f1"/><path d="M0 12v-1Q0 0 11 0h24q11 0 11 11v1z" fill="#f8cf47"/><path d="M0 14h46" stroke="#bbb" stroke-dasharray="1 2"/><path d="M0 23h46M0 33h46" stroke="#d3d2cf"/></svg></button>
    <button class="slot on" aria-label="TV"><svg viewBox="0 0 46 46"><rect width="46" height="46" rx="11" fill="url(#gDark)"/><use href="#apple" x="5" y="14" width="16" height="17" color="#fff"/><text x="20" y="31" font-family="Inter" font-size="19" font-weight="500" fill="#fff">tv</text></svg></button>
    <button class="slot" aria-label="Keynote"><svg viewBox="0 0 46 46"><rect width="46" height="46" rx="11" fill="url(#gBlue)"/><path d="M13 7h20l4 14H9z" fill="#fff"/><path d="M23 21v17M17 39h12" stroke="#fff" stroke-width="2.500"/><circle cx="23" cy="13" r="4.500" fill="#4b8ee8"/><path d="M23 13V8.500a4.500 4.500 0 0 1 4 6z" fill="#e5533c"/><path d="M23 13l4 1.500A4.500 4.500 0 0 1 21 17z" fill="#5bbb4a"/></svg></button>
    <button class="slot" aria-label="Pages"><svg viewBox="0 0 46 46"><rect width="46" height="46" rx="11" fill="url(#gOrange)"/><path d="M36 8q3 1 1 5L17 36l-8 4 2-8z" fill="#fff"/><path d="M33 12L14 35" stroke="#d9b48a" stroke-width="1"/><path d="M17 39.500h22" stroke="#ffe0b8" stroke-width="1.500"/></svg></button>
    <button class="slot" aria-label="App Store"><svg viewBox="0 0 46 46"><rect width="46" height="46" rx="11" fill="url(#gApp)"/><use href="#aicon"/></svg></button>
    <button class="slot" aria-label="Numbers"><svg viewBox="0 0 46 46"><rect width="46" height="46" rx="11" fill="url(#gGreen)"/><path d="M8 30h6v9H8zM16 22h6v17h-6zM24 7h6v32h-6zM32 16h6v23h-6z" fill="#fff"/></svg></button>
    <button class="slot on" aria-label="Settings"><svg viewBox="0 0 46 46"><rect width="46" height="46" rx="11" fill="#a9adae"/><circle cx="23" cy="23" r="19.500" fill="#3c3c3c"/><circle cx="23" cy="23" r="16.500" fill="none" stroke="#aaa" stroke-width="2" stroke-dasharray="2 1.500"/><circle cx="23" cy="23" r="11.500" fill="none" stroke="#b9b9b9" stroke-width="2.500"/><path d="M23 23h13M23 23l-7-11M23 23l-7 11" stroke="#b9b9b9" stroke-width="2.500"/><circle cx="23" cy="23" r="3.500" fill="#555" stroke="#ccc"/></svg></button>
    <button class="slot" aria-label="Assistant"><svg viewBox="0 0 46 46"><rect width="46" height="46" rx="11" fill="url(#gNavy)"/><g fill="none" stroke="#4fc6c6" stroke-width="2.600"><path d="M20 8a14.500 14.500 0 0 0-2 28l5 2 5-2a14.500 14.500 0 0 0-2-28"/><path d="M20 15a8 8 0 1 0 6 0M23 7v8"/></g></svg></button>
    <button class="slot" aria-label="iPhone Mirroring"><svg viewBox="0 0 46 46"><rect width="46" height="46" rx="11" fill="#dadadc"/><rect x="13" y="4" width="20" height="39" rx="3" fill="url(#gPhone)" stroke="#222" stroke-width="1.500"/><rect x="19" y="5" width="8" height="2" fill="#222"/></svg></button>
    <span class="sep"><i></i></span>
    <button class="slot on" aria-label="Code"><svg><use href="#code"/></svg></button>
    <button class="slot on" aria-label="Code"><svg><use href="#code"/></svg></button>
    <button class="slot on" aria-label="Chrome"><svg viewBox="0 0 46 46"><rect width="46" height="46" rx="11" fill="#fff"/><path d="M23 23L6 13a20 20 0 0 1 34.500 0z" fill="#d9483b"/><path d="M23 23l17.500-10A20 20 0 0 1 23 43z" fill="#f7c740"/><path d="M23 23v20A20 20 0 0 1 5.500 13z" fill="#3f9e50"/><circle cx="23" cy="23" r="9.500" fill="#fff"/><circle cx="23" cy="23" r="7.500" fill="#3d78e8"/></svg></button>
    <button class="slot on" aria-label="Preview"><svg viewBox="0 0 46 46"><rect width="46" height="46" rx="11" fill="#fff"/><path d="M4 10q0-6 6-6h26q6 0 6 6v15H4z" fill="#9dbdf0"/><path d="M4 25h38v8H4z" fill="#23457c"/><path d="M4 33h38v3q0 6-6 6H10q-6 0-6-6z" fill="#c9b39a"/><rect x="23" y="23" width="20" height="9" rx="3" fill="#1b1b1b"/><path d="M24 32h18l4 16H20z" fill="#d5d8dc" stroke="#777"/></svg></button>
    <button class="slot on" aria-label="ChatGPT"><svg viewBox="0 0 46 46"><rect width="46" height="46" rx="11" fill="#eff2f8"/><use href="#openai" x="6" y="6" width="34" height="34" color="#222"/></svg></button>
    <button class="slot on" aria-label="WeChat"><svg viewBox="0 0 46 46"><rect width="46" height="46" rx="11" fill="#5dd974"/><use href="#wechat" x="5" y="7" width="36" height="32" color="#fff" fill="#3fae56"/></svg></button>
    <button class="slot on" aria-label="Steam"><svg viewBox="0 0 46 46"><circle cx="23" cy="23" r="25" fill="url(#gSteam)"/><path d="M-2 25l14 6q3-2 6-2l6-9q0-9 9-9t9 9-9 9l-9 7q-1 6-7 6-5 0-7-5L-1 32z" fill="#fff"/><circle cx="33" cy="20" r="5.500" fill="none" stroke="#143057" stroke-width="2"/><circle cx="17" cy="36" r="4" fill="none" stroke="#2a6a9c" stroke-width="1.500"/></svg></button>
    <button class="slot on" aria-label="Terminal"><svg viewBox="0 0 46 46"><rect x="1" y="1" width="44" height="44" rx="10" fill="#1d1d1d" stroke="#d6e6ea" stroke-width="2"/><path d="M7 9l5 3.500L7 16M15 17h6" stroke="#fff" stroke-width="1.800" fill="none"/></svg></button>
    <button class="slot on" aria-label="Xcode"><svg viewBox="0 0 46 46"><rect width="46" height="46" rx="11" fill="url(#gApp)"/><rect x="3" y="3" width="40" height="40" rx="8" fill="none" stroke="#8ec6f8"/><use href="#aicon" opacity=".6"/><path d="M34 4l4 1-16 43-5-2z" fill="#2e3035"/><path d="M24-2q10-3 22 4l3 8-5-2-5-3-6 3z" fill="#44474c"/></svg></button>
    <button class="slot on" aria-label="Simulator"><svg viewBox="0 0 46 46"><rect width="46" height="46" rx="11" fill="url(#gApp)"/><rect x="3" y="3" width="40" height="40" rx="8" fill="none" stroke="#8ec6f8"/><use href="#aicon" opacity=".6"/><path d="M34 12l14 3-10 33-19-5z" fill="#141414"/><path d="M28 30l12 1M35 25l-5 10" stroke="#ddd" stroke-width="2"/></svg></button>
    <span class="sep"><i></i></span>
    <button class="slot" aria-label="Downloads"><svg class="wide" viewBox="0 0 58 46"><path d="M3 4q0-3 3-3h14l5 5h27q3 0 3 3v34q0 3-3 3H6q-3 0-3-3z" fill="#4a9fd6"/><path d="M3 13h52v30q0 3-3 3H6q-3 0-3-3z" fill="#7cc5f2"/><circle cx="29" cy="27" r="10" fill="#4a9fd6"/><path d="M29 21v11M24.500 28l4.500 4.500 4.500-4.500" stroke="#8fd0f6" stroke-width="2" fill="none"/></svg></button>
    <button class="slot" aria-label="Missing item"><svg viewBox="0 0 46 46"><path d="M12 12Q12 3 23 3t11 10q0 6-6 10-5 4-5 11" fill="none" stroke="#e6e6e6" stroke-width="4"/><circle cx="23" cy="42" r="3" fill="#e6e6e6"/></svg></button>
    <button class="slot" aria-label="Window"><svg class="wide" viewBox="0 0 58 46"><path d="M3 2h52v42H3z" fill="#fafafa"/><path d="M6 9h46v31H6z" fill="none" stroke="#8b7f6a"/><circle cx="29" cy="10" r="3" fill="#d8453a"/><path d="M22 16h16" stroke="#e8c34d" stroke-width="3"/><path d="M9 22h18M9 26h14M9 31h20M32 24h16M32 29h14" stroke="#aaa"/><rect x="39" y="32" width="16" height="14" rx="3" fill="#8ba8dd"/><path d="M39 39h16v4q0 3-3 3H42q-3 0-3-3z" fill="#3a4660"/></svg></button>
    <button class="slot" aria-label="Window"><svg class="wide" viewBox="0 0 58 46"><path d="M3 2h52v42H3z" fill="#fafafa"/><path d="M10 11h18M10 15h10M10 20h20" stroke="#5d8fd0" stroke-width="3"/><path d="M10 27h6M10 31h26" stroke="#5d8fd0" stroke-width="2"/><rect x="39" y="32" width="16" height="14" rx="3" fill="#8ba8dd"/><path d="M39 39h16v4q0 3-3 3H42q-3 0-3-3z" fill="#3a4660"/></svg></button>
    <button class="slot" aria-label="Python window"><svg class="wide" viewBox="0 0 58 46"><path d="M2 6h54v34H2z" fill="#f5f5f3" stroke="#111" stroke-width="2"/><path d="M5 10h24M5 14h18M5 18h30M5 22h20M5 31h40" stroke="#aaa"/><rect x="7" y="40" width="50" height="12" rx="6" fill="#7d7d7f"/><text x="32" y="50" text-anchor="middle" font-family="Inter" font-size="11" fill="#fff">Python...</text></svg></button>
    <button class="slot" aria-label="Python window"><svg class="wide" viewBox="0 0 58 46"><path d="M2 6h54v34H2z" fill="#f5f5f3" stroke="#111" stroke-width="2"/><path d="M5 10h30M5 14h22M5 22h34M5 35h30" stroke="#aaa"/><path d="M4 18h50M4 29h50" stroke="#e9cf7a" stroke-width="2"/><rect x="7" y="40" width="50" height="12" rx="6" fill="#7d7d7f"/><text x="32" y="50" text-anchor="middle" font-family="Inter" font-size="11" fill="#fff">Python...</text></svg></button>
    <button class="slot" aria-label="Trash"><svg viewBox="0 0 46 46"><path d="M4 1h38l-6 44q-1 4-13 4T10 45z" fill="#ebebeb" opacity=".92"/><ellipse cx="23" cy="2" rx="19" ry="4" fill="#d2d2d2" stroke="#f6f6f6"/></svg></button>
  </nav>
</footer>
</div>
</body>
</html>
